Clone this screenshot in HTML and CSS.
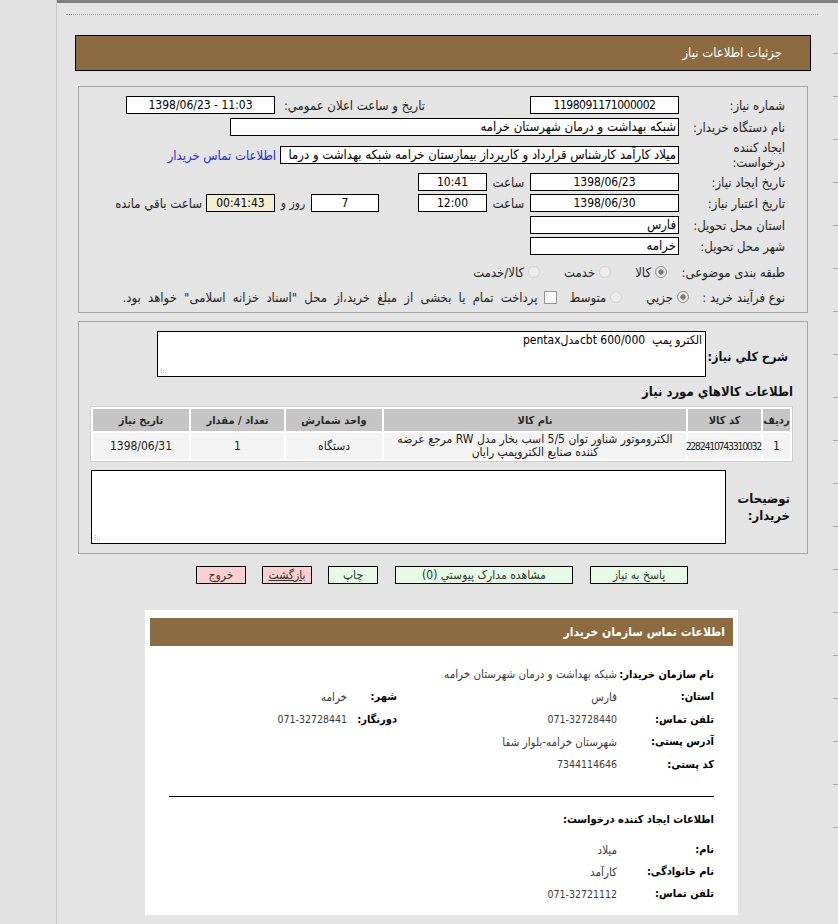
FILE: index.html
```html
<!DOCTYPE html>
<html lang="fa">
<head>
<meta charset="utf-8">
<title>جزئیات اطلاعات نیاز</title>
<link rel="stylesheet" href="styles.css">
</head>
<body>
<div class="page">
  <aside class="side"></aside>
  <div class="wrap">
    <main class="main" dir="rtl">
      <div class="dots"></div>
      <div class="titlebar">جزئیات اطلاعات نیاز</div>

      <section class="box box1">
        <div class="row">
          <div class="lbl">شماره نیاز:</div>
          <div class="field w149 num tight" dir="ltr">1198091171000002</div>
          <div class="lbl2">تاریخ و ساعت اعلان عمومي:</div>
          <div class="field w149 num" dir="ltr">1398/06/23 - 11:03</div>
        </div>
        <div class="row">
          <div class="lbl">نام دستگاه خریدار:</div>
          <div class="field w449">شبکه بهداشت و درمان شهرستان خرامه</div>
        </div>
        <div class="row row-tall">
          <div class="lbl">ایجاد کننده<br>درخواست:</div>
          <div class="field w399">میلاد کارآمد کارشناس قرارداد و کارپرداز بیمارستان خرامه شبکه بهداشت و درما</div>
          <a class="link" href="#">اطلاعات تماس خریدار</a>
        </div>
        <div class="row h20">
          <div class="lbl">تاریخ ایجاد نیاز:</div>
          <div class="field w149 num" dir="ltr">1398/06/23</div>
          <div class="unit u43">ساعت</div>
          <div class="field w69 num" dir="ltr">10:41</div>
        </div>
        <div class="row">
          <div class="lbl">تاریخ اعتبار نیاز:</div>
          <div class="field w149 num" dir="ltr">1398/06/30</div>
          <div class="unit u43">ساعت</div>
          <div class="field w69 num" dir="ltr">12:00</div>
          <div class="field w68 num gap39" dir="ltr">7</div>
          <div class="unit u36">روز و</div>
          <div class="field w69 num timer" dir="ltr">00:41:43</div>
          <div class="remain">ساعت باقي مانده</div>
        </div>
        <div class="row">
          <div class="lbl">استان محل تحویل:</div>
          <div class="field w149">فارس</div>
        </div>
        <div class="row h20">
          <div class="lbl">شهر محل تحویل:</div>
          <div class="field w149">خرامه</div>
        </div>
        <div class="row row-cat">
          <div class="lbl lbl-cat">طبقه بندی موضوعی:</div>
          <div class="opt"><span class="radio on"></span><span>کالا</span></div>
          <div class="opt"><span class="radio"></span><span>خدمت</span></div>
          <div class="opt"><span class="radio"></span><span>کالا/خدمت</span></div>
        </div>
        <div class="row row-proc">
          <div class="lbl lbl-proc">نوع فرآیند خرید :</div>
          <div class="opt"><span class="radio on"></span><span>جزيي</span></div>
          <div class="opt opt-mid"><span class="radio"></span><span>متوسط</span></div>
          <div class="opt opt-last"><span class="check"></span><span class="pay">پرداخت تمام یا بخشی از مبلغ خرید،از محل "اسناد خزانه اسلامی" خواهد بود.</span></div>
        </div>
      </section>

      <section class="box box2">
        <div class="row-area">
          <div class="blbl desc-lbl">شرح کلي نیاز:</div>
          <div class="area area-desc">الکترو پمپ  cbt 600/000مدلpentax<span class="grip"><svg width="8" height="8" viewBox="0 0 8 8"><g fill="#b5b5b5"><rect x="1" y="1" width="1" height="1"/><rect x="1" y="3" width="1" height="1"/><rect x="1" y="5" width="1" height="1"/><rect x="3" y="3" width="1" height="1"/><rect x="3" y="5" width="1" height="1"/><rect x="5" y="5" width="1" height="1"/></g></svg></span></div>
        </div>
        <h3 class="items-title">اطلاعات کالاهاي مورد نیاز</h3>
        <table class="items">
          <colgroup>
            <col class="c1"><col class="c2"><col class="c3"><col class="c4"><col class="c5"><col class="c6">
          </colgroup>
          <thead>
            <tr>
              <th>ردیف</th>
              <th>کد کالا</th>
              <th>نام کالا</th>
              <th>واحد شمارش</th>
              <th>تعداد / مقدار</th>
              <th>تاریخ نیاز</th>
            </tr>
          </thead>
          <tbody>
            <tr>
              <td>1</td>
              <td class="code">2282410743310032</td>
              <td class="name">الکتروموتور شناور توان 5/5 اسب بخار مدل RW مرجع عرضه کننده صنایع الکتروپمپ رایان</td>
              <td>دستگاه</td>
              <td>1</td>
              <td>1398/06/31</td>
            </tr>
          </tbody>
        </table>
        <div class="row-area row-notes">
          <div class="blbl notes-lbl">توضیحات<br>خریدار:</div>
          <div class="area area-notes"><span class="grip"><svg width="8" height="8" viewBox="0 0 8 8"><g fill="#b5b5b5"><rect x="1" y="1" width="1" height="1"/><rect x="1" y="3" width="1" height="1"/><rect x="1" y="5" width="1" height="1"/><rect x="3" y="3" width="1" height="1"/><rect x="3" y="5" width="1" height="1"/><rect x="5" y="5" width="1" height="1"/></g></svg></span></div>
        </div>
      </section>

      <div class="buttons">
        <button class="btn green w98">پاسخ به نیاز</button>
        <button class="btn green w178">مشاهده مدارک پیوستي (0)</button>
        <button class="btn green w50">چاپ</button>
        <button class="btn pink w50 ul">بازگشت</button>
        <button class="btn pink w50">خروج</button>
      </div>

      <section class="contact">
        <div class="contact-head">اطلاعات تماس سازمان خریدار</div>
        <div class="cgrid">
          <div class="cl">نام سازمان خریدار:</div><div class="cv span3">شبکه بهداشت و درمان شهرستان خرامه</div>
          <div class="cl">استان:</div><div class="cv">فارس</div><div class="cl">شهر:</div><div class="cv">خرامه</div>
          <div class="cl">تلفن تماس:</div><div class="cv cnum"><span dir="ltr">071-32728440</span></div><div class="cl">دورنگار:</div><div class="cv cnum"><span dir="ltr">071-32728441</span></div>
          <div class="cl">آدرس پستی:</div><div class="cv span3">شهرستان خرامه-بلوار شفا</div>
          <div class="cl">کد پستی:</div><div class="cv span3 cnum">7344114646</div>
        </div>
        <hr class="sep">
        <div class="creator-title">اطلاعات ایجاد کننده درخواست:</div>
        <div class="cgrid cgrid2">
          <div class="cl">نام:</div><div class="cv span3">میلاد</div>
          <div class="cl">نام خانوادگی:</div><div class="cv span3">کارآمد</div>
          <div class="cl">تلفن تماس:</div><div class="cv span3 cnum"><span dir="ltr">071-32721112</span></div>
        </div>
      </section>
    </main>
    <div class="edge"><div class="edge-lines"></div></div>
  </div>
</div>
</body>
</html>
```
FILE: styles.css
```css
html, body {
  margin: 0;
  padding: 0;
}
body {
  background: #e3e3e3;
  font-family: "DejaVu Sans Condensed", "DejaVu Sans", sans-serif;
  font-size: 13px;
  color: #262626;
}
.page {
  display: flex;
  min-height: 924px;
}
.side {
  width: 56px;
  flex: none;
  background: #e2e2e2;
  border-right: 1px solid #c9c9c9;
}
.wrap {
  flex: 1;
  display: flex;
  border-top: 3px solid #808080;
  background: #e4e4e4;
}
.main {
  flex: 1;
  min-width: 0;
}
.edge {
  width: 5px;
  flex: none;
  padding-top: 50px;
}
.edge-lines {
  height: 780px;
  background: repeating-linear-gradient(to bottom, #a9a9a9 0 1px, transparent 1px 43px);
}
.dots {
  margin: 11px 15px 0 9px;
  border-top: 1px dotted #9a9a9a;
}
.titlebar {
  margin: 20px 22px 0 18px;
  height: 36px;
  box-sizing: border-box;
  border: 1px solid #000;
  background: #8c6b41;
  color: #fff;
  padding-right: 28px;
  line-height: 34px;
  font-size: 13px;
}
.box {
  margin: 0 25px 0 21px;
  border: 1px solid #a6a6a6;
}
.box1 {
  margin-top: 15px;
  height: 227px;
  box-sizing: border-box;
  padding-top: 7px;
}
.row {
  display: flex;
  align-items: center;
  height: 22px;
}
.row.h20 { height: 20px; }
.row-tall { height: 34px; }
.row-cat { height: 31px; padding-top: 1px; box-sizing: border-box; }
.row-proc { height: 20px; }
.lbl {
  width: 128px;
  flex: none;
  box-sizing: border-box;
  padding-right: 22px;
  line-height: 15px;
  white-space: nowrap;
}
.lbl-proc {
  width: 118px;
}
.lbl2 {
  width: 105px;
  margin-right: 105px;
  flex: none;
  white-space: nowrap;
  display: flex;
  justify-content: flex-start;
}
.field {
  height: 18px;
  box-sizing: border-box;
  border: 1px solid #000;
  background: #fff;
  color: #000;
  line-height: 16px;
  padding: 0 2px;
  white-space: nowrap;
  overflow: hidden;
  flex: none;
}
.num {
  text-align: center;
  font-size: 12px;
}
.tight { letter-spacing: -0.5px; }
.w149 { width: 149px; }
.w449 { width: 449px; }
.w399 { width: 399px; }
.w69 { width: 69px; }
.w68 { width: 68px; }
.lbl2 + .field { margin-right: 45px; }
.gap39 { margin-right: 39px; }
.timer { background: #f3efd2; }
.unit {
  flex: none;
  text-align: center;
}
.u43 { width: 43px; }
.u36 { width: 36px; font-size: 12px; }
.remain {
  margin-right: 4px;
  white-space: nowrap;
}
.link {
  margin-right: 4px;
  color: #2b2bd6;
  text-decoration: none;
  white-space: nowrap;
}
.opt {
  display: flex;
  align-items: center;
  gap: 4px;
  margin-left: 24px;
  white-space: nowrap;
}
.lbl-cat + .opt { margin-right: 12px; }
.opt-mid { margin-left: 13px; }
.opt-last { gap: 6px; }
.pay { word-spacing: 3.5px; }
.radio {
  width: 12px;
  height: 12px;
  box-sizing: border-box;
  border-radius: 50%;
  border: 1px solid #d2d2d2;
  background: #ececec;
  flex: none;
}
.radio.on {
  border-color: #8d8d8d;
  background: radial-gradient(circle, #7d7d7d 0 2.4px, #e6e6e6 3px);
}
.check {
  width: 13px;
  height: 13px;
  box-sizing: border-box;
  border: 1px solid #9a9a9a;
  background: #fafafa;
  flex: none;
}
.box2 {
  margin-top: 8px;
  padding: 9px 0 9px;
}
.row-area {
  display: flex;
  align-items: center;
}
.blbl {
  flex: none;
  box-sizing: border-box;
  font-weight: bold;
  color: #111;
  font-size: 13px;
  line-height: 17px;
  white-space: nowrap;
}
.desc-lbl {
  width: 101px;
  padding-right: 19px;
  padding-top: 4px;
  font-size: 12.5px;
}
.notes-lbl {
  width: 81px;
  padding-right: 17px;
}
.area {
  position: relative;
  box-sizing: border-box;
  border: 1px solid #000;
  background: #fff;
  color: #000;
  padding: 1px 3px;
  line-height: 15px;
  font-size: 12px;
  white-space: pre-wrap;
}
.area-desc {
  width: 549px;
  height: 46px;
}
.area-notes {
  width: 635px;
  height: 74px;
}
.grip {
  position: absolute;
  left: 2px;
  bottom: 1px;
  line-height: 0;
}
.items-title {
  margin: 7px 14px 6px 0;
  font-size: 13px;
  font-weight: bold;
  color: #111;
  line-height: 16px;
}
.items {
  margin-right: 14px;
  width: 700px;
  table-layout: fixed;
  border: 1px solid #cfcfcf;
  border-spacing: 2px;
  background: #fff;
}
.items th {
  background: #c5c5c5;
  color: #2a2a2a;
  font-weight: bold;
  height: 22px;
  padding: 0;
  font-size: 11px;
}
.items td {
  background: #f3f3f3;
  color: #222;
  text-align: center;
  height: 24px;
  padding: 0 2px;
  line-height: 13px;
  font-size: 12px;
}
.items td.name { padding: 0 3px; }
.items td.code {
  padding: 0;
  font-size: 10.5px;
  letter-spacing: -1.3px;
  white-space: nowrap;
}
.c1 { width: 27px; }
.c2 { width: 73px; }
.c3 { width: 302px; }
.c4 { width: 96px; }
.c5 { width: 93px; }
.c6 { width: 96px; }
.row-notes {
  margin-top: 8px;
}
.buttons {
  display: flex;
  align-items: center;
  gap: 17px;
  margin: 12px 145px 0 0;
  height: 18px;
}
.btn {
  height: 18px;
  box-sizing: border-box;
  border: 1px solid #000;
  font-family: inherit;
  font-size: 12px;
  color: #333;
  padding: 0;
  line-height: 16px;
  flex: none;
}
.green { background: #e6fbe6; }
.pink { background: #fdd0d0; }
.ul { text-decoration: underline; }
.w98 { width: 98px; }
.w178 { width: 178px; }
.w50 { width: 50px; }
.buttons .w50 + .w50 { margin-right: -1px; }
.contact {
  margin: 26px 95px 0 88px;
  height: 305px;
  box-sizing: border-box;
  background: #fff;
  padding: 8px 5px 0;
  font-size: 11.5px;
}
.contact-head {
  height: 28px;
  background: #8c6b41;
  color: #fff;
  font-weight: bold;
  font-size: 12px;
  line-height: 28px;
  padding-right: 8px;
}
.cgrid {
  display: grid;
  grid-template-columns: 97px 220px 50px auto;
  grid-auto-rows: 22.5px;
  align-items: center;
  margin: 17px 19px 0 0;
}
.cl {
  font-weight: bold;
  color: #000;
  font-size: 11px;
}
.cv {
  color: #3a3a3a;
}
.cnum { font-size: 10.5px; }
.span3 { grid-column: span 3; }
.sep {
  margin: 20px 19px 0 19px;
  border: 0;
  border-top: 1px solid #000;
  height: 0;
}
.creator-title {
  margin: 16px 19px 0 0;
  font-weight: bold;
  color: #000;
  font-size: 11px;
}
.cgrid2 {
  margin-top: 13px;
  grid-auto-rows: 22px;
}
```
